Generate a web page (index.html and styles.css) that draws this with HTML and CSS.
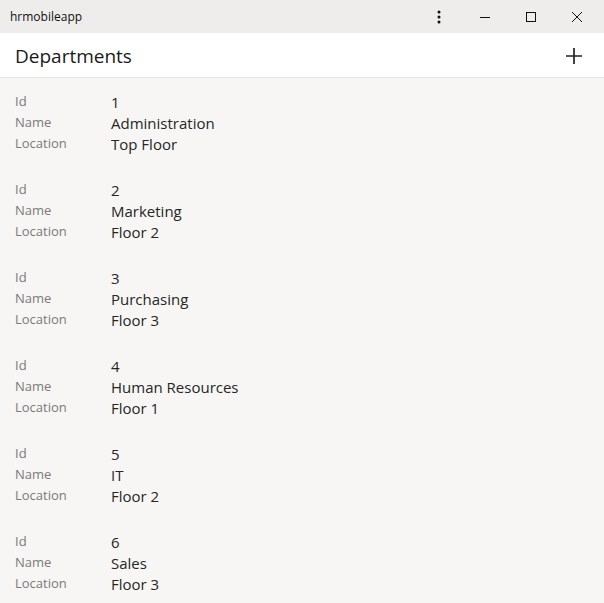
FILE: index.html
```html
<!DOCTYPE html>
<html>
<head>
<meta charset="utf-8">
<link rel="stylesheet" href="styles.css">
</head>
<body>
<div class="titlebar">
  <span class="app-name">hrmobileapp</span>
  <div class="win-buttons">
    <span class="wbtn"><svg width="12" height="14" viewBox="0 0 12 14"><circle cx="6" cy="2" r="1.5" fill="#111"/><circle cx="6" cy="7" r="1.5" fill="#111"/><circle cx="6" cy="12" r="1.5" fill="#111"/></svg></span>
    <span class="wbtn"><svg width="12" height="12" viewBox="0 0 12 12"><line x1="1" y1="6.5" x2="11" y2="6.5" stroke="#111" stroke-width="1"/></svg></span>
    <span class="wbtn"><svg width="12" height="12" viewBox="0 0 12 12"><rect x="1.5" y="1.5" width="9" height="9" fill="none" stroke="#111" stroke-width="1"/></svg></span>
    <span class="wbtn"><svg width="12" height="12" viewBox="0 0 12 12"><path d="M1 1 L11 11 M11 1 L1 11" stroke="#111" stroke-width="1"/></svg></span>
  </div>
</div>
<div class="header">
  <h1 class="page-title">Departments</h1>
  <span class="add-btn"><svg width="16" height="16" viewBox="0 0 16 16"><path d="M8 0 V16 M0 8 H16" stroke="#222" stroke-width="1.7"/></svg></span>
</div>
<div class="list" id="list"></div>
<script>
const data = [
  [1, "Administration", "Top Floor"],
  [2, "Marketing", "Floor 2"],
  [3, "Purchasing", "Floor 3"],
  [4, "Human Resources", "Floor 1"],
  [5, "IT", "Floor 2"],
  [6, "Sales", "Floor 3"]
];
const list = document.getElementById("list");
for (const [id, name, loc] of data) {
  const r = document.createElement("div");
  r.className = "record";
  r.innerHTML = `<div class="row"><span class="label">Id</span><span class="value">${id}</span></div>
<div class="row"><span class="label">Name</span><span class="value">${name}</span></div>
<div class="row"><span class="label">Location</span><span class="value">${loc}</span></div>`;
  list.appendChild(r);
}
</script>
</body>
</html>
```
FILE: styles.css
```css
* { box-sizing: border-box; }
html, body { margin: 0; padding: 0; }
body {
  width: 604px;
  height: 603px;
  overflow: hidden;
  background: #f7f6f5;
  font-family: "Open Sans", "Noto Sans", sans-serif;
  color: #222;
}
.titlebar {
  height: 33px;
  background: #eeedec;
  display: flex;
  align-items: center;
  justify-content: space-between;
}
.app-name {
  padding-left: 10px;
  font-size: 12px;
  color: #111;
}
.win-buttons {
  display: flex;
  align-items: center;
  height: 100%;
  padding-right: 4px;
}
.wbtn {
  width: 46px;
  height: 100%;
  display: flex;
  align-items: center;
  justify-content: center;
}
.header {
  height: 45px;
  background: #fff;
  border-bottom: 1px solid #e6e5e4;
  display: flex;
  align-items: center;
  justify-content: space-between;
  padding: 2px 22px 0 15px;
}
.page-title {
  margin: 0;
  font-size: 19px;
  font-weight: 500;
  color: #1a1a1a;
}
.add-btn { display: flex; }
.list {
  padding: 13px 15px 0 15px;
  display: flex;
  flex-direction: column;
  gap: 25px;
}
.record {
  display: flex;
  flex-direction: column;
}
.row {
  display: flex;
  align-items: flex-start;
  height: 21px;
}
.label {
  width: 96px;
  font-size: 13px;
  line-height: 20px;
  color: #7a7a7a;
}
.value {
  font-size: 15px;
  line-height: 22px;
  color: #262626;
}
```
